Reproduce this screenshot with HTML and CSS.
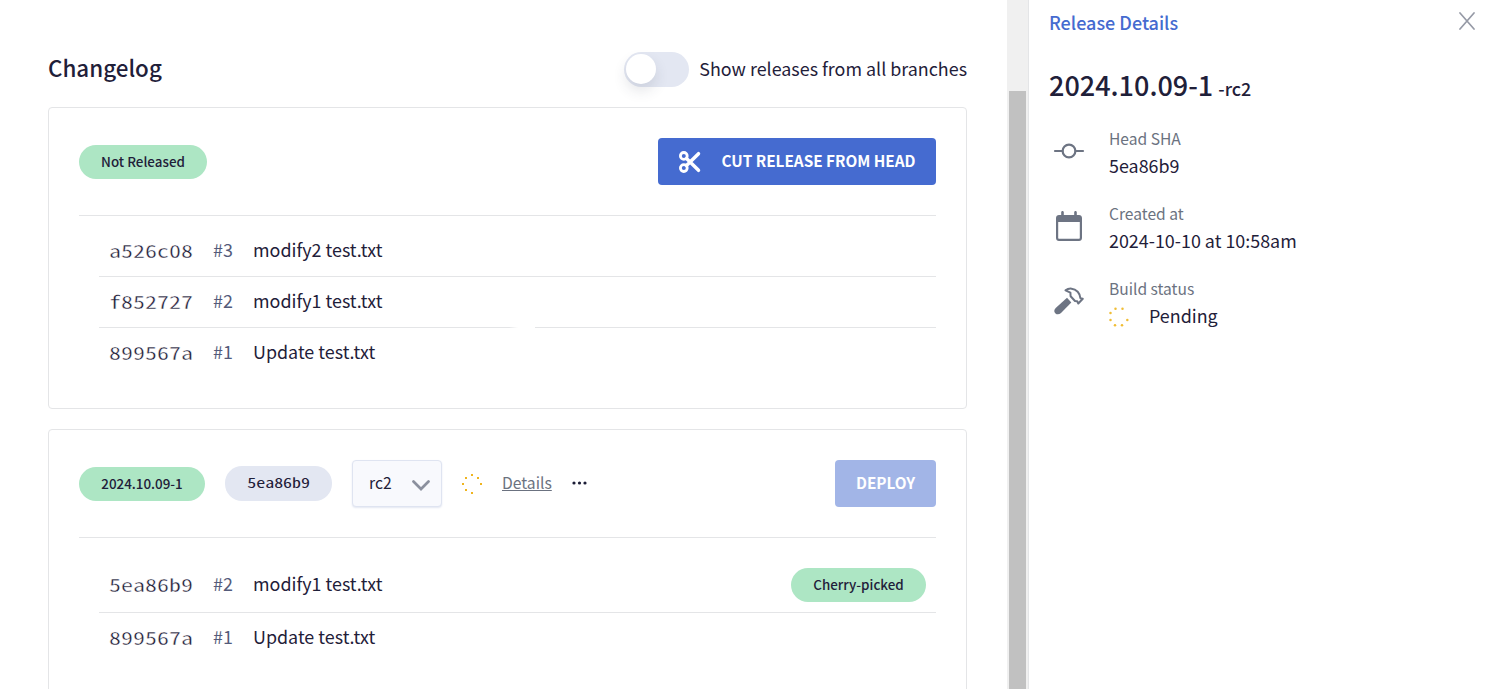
FILE: index.html
```html
<!DOCTYPE html>
<html lang="en">
<head>
<meta charset="utf-8">
<title>Changelog</title>
<link rel="stylesheet" href="styles.css">
</head>
<body>
<div class="app">
  <main class="main">
    <header class="page-head">
      <h1 class="title">Changelog</h1>
      <div class="toggle-row">
        <div class="toggle"><div class="knob"></div></div>
        <span class="toggle-label">Show releases from all branches</span>
      </div>
    </header>

    <section class="card">
      <div class="card-head">
        <span class="pill green">Not Released</span>
        <button class="btn cut">
          <svg class="scissors" viewBox="0 0 22 22" fill="none" stroke="currentColor"><circle cx="4.800" cy="4.900" r="3.400" stroke-width="2.800"/><circle cx="4.800" cy="17.100" r="3.400" stroke-width="2.800"/><path d="M7.500 14.400 19.500 2.700M7.500 7.600 19.500 19.300" stroke-width="3.500" stroke-linecap="round"/></svg>
          <span>CUT RELEASE FROM HEAD</span>
        </button>
      </div>
      <div class="commits">
        <div class="row"><span class="sha"><span class="mono">a526c08</span></span><span class="pr">#3</span><span class="msg">modify2 test.txt</span></div>
        <div class="row broken"><span class="sha"><span class="mono">f852727</span></span><span class="pr">#2</span><span class="msg">modify1 test.txt</span></div>
        <div class="row"><span class="sha"><span class="mono">899567a</span></span><span class="pr">#1</span><span class="msg">Update test.txt</span></div>
      </div>
    </section>

    <section class="card">
      <div class="card-head">
        <div class="head-left">
          <span class="pill green version">2024.10.09-1</span>
          <span class="pill gray"><span class="mono">5ea86b9</span></span>
          <div class="select"><span class="lift">rc2</span>
            <svg class="chevron" viewBox="0 0 18 11"><path d="M1.500 1.500 9 9l7.500-7.500" fill="none" stroke="#8b909e" stroke-width="2.700" stroke-linecap="round"/></svg>
          </div>
          <svg class="spin" viewBox="0 0 20 20" fill="#efb41f"><rect x="9" y="0" width="2" height="2"/><rect x="15" y="3" width="2" height="2"/><rect x="18" y="9" width="2" height="2"/><rect x="9" y="18" width="2" height="2"/><rect x="3" y="15" width="2" height="2"/><rect x="0" y="9" width="2" height="2"/><rect x="3" y="3" width="2" height="2"/></svg>
          <a class="details">Details</a>
          <svg class="dots" viewBox="0 0 15 4" fill="#1b1d36"><circle cx="2" cy="2" r="1.600"/><circle cx="7.500" cy="2" r="1.600"/><circle cx="13" cy="2" r="1.600"/></svg>
        </div>
        <button class="btn deploy">DEPLOY</button>
      </div>
      <div class="commits tall">
        <div class="row picked"><span class="sha"><span class="mono">5ea86b9</span></span><span class="pr">#2</span><span class="msg">modify1 test.txt</span><span class="pill green cherry">Cherry-picked</span></div>
        <div class="row"><span class="sha"><span class="mono">899567a</span></span><span class="pr">#1</span><span class="msg">Update test.txt</span></div>
      </div>
    </section>
  </main>
  <div class="scrollbar"><div class="thumb"></div></div>
  <aside class="panel">
    <div class="panel-head">
      <span class="panel-title">Release Details</span>
      <svg class="close" viewBox="0 0 16 18"><path d="M1 1l14 16M15 1 1 17" stroke="#969aa6" stroke-width="1.700" stroke-linecap="round"/></svg>
    </div>
    <h2 class="release"><span class="rel-num">2024.10.09-1</span><span class="rel-rc">-rc2</span></h2>
    <div class="item">
      <svg class="icon" viewBox="0 0 30 30" fill="none" stroke="#6d7483" stroke-width="2.200" stroke-linecap="round"><circle cx="15" cy="15" r="6.400"/><path d="M1 15h7.500M21.500 15H29"/></svg>
      <div class="info"><span class="label">Head SHA</span><span class="value">5ea86b9</span></div>
    </div>
    <div class="item">
      <svg class="icon" viewBox="0 0 30 30" fill="#6d7483"><path fill-rule="evenodd" d="M8.500 0c.8 0 1.300.6 1.300 1.300V4h10.400V1.300c0-.7.5-1.300 1.300-1.300s1.300.6 1.300 1.300V4H25c1.700 0 3 1.300 3 3v20c0 1.700-1.300 3-3 3H5c-1.700 0-3-1.300-3-3V7c0-1.700 1.300-3 3-3h2.200V1.300C7.200.6 7.700 0 8.500 0ZM4.200 11v15.700c0 .7.400 1 1 1h19.600c.6 0 1-.3 1-1V11Z"/></svg>
      <div class="info"><span class="label">Created at</span><span class="value">2024-10-10 at 10:58am</span></div>
    </div>
    <div class="item">
      <svg class="icon" viewBox="0 0 30 30" fill="#6d7483"><path d="M13 11.800 17.300 16.500 7 27c-1.700 1.600-4 1.800-5.500.5-1.700-1.500-1.700-3.800.2-5.600Z"/><path d="M11.500 4.400C15 1.700 20 2 23.700 5.700 25.700 7.800 26.200 9.500 26.400 12.300L28.800 12.800 24.300 17.500 23.200 15.300 21 15 16.600 10.200 16.400 6.600 11.500 4.400Z" fill="none" stroke="#6d7483" stroke-width="2" stroke-linejoin="round"/></svg>
      <div class="info"><span class="label">Build status</span>
        <span class="value status"><svg class="spin low" viewBox="0 0 20 20" fill="#f0bd35"><circle cx="6.500" cy="1.700" r="1.250"/><circle cx="13.500" cy="1.700" r="1.250"/><circle cx="1.500" cy="6" r="1.250"/><circle cx="1.500" cy="13" r="1.250"/><circle cx="6" cy="18.300" r="1.250"/><circle cx="13" cy="18.300" r="1.250"/><circle cx="18.300" cy="13" r="1.250"/></svg><span>Pending</span></span>
      </div>
    </div>
  </aside>
</div>
</body>
</html>
```

FILE: styles.css
```css
* { box-sizing: border-box; }
body { margin: 0; overflow: hidden; background: #fff; color: #1f2039; font-family: "Noto Sans CJK SC", "Noto Sans", sans-serif; font-size: 17.9px; font-weight: 400; line-height: 24px; }
span, a { white-space: nowrap; }
svg { display: block; flex: none; }
.app { display: flex; height: 689px; }
.main { width: 1007px; padding: 50px 40px 0 48px; overflow: hidden; flex: none; }
.page-head { display: flex; justify-content: space-between; align-items: center; height: 39px; margin-bottom: 18px; }
.title { margin: 0; padding-bottom: 5px; font-size: 22.400px; font-weight: 500; }
.toggle-row { display: flex; align-items: center; gap: 10px; }
.toggle { width: 65px; height: 35px; border-radius: 18px; background: #e3e7f2; padding: 2px; }
.toggle-label { padding-bottom: 3px; }
.knob { width: 30px; height: 30px; border-radius: 50%; background: #fff; box-shadow: 0 7px 14px rgba(50, 55, 80, .13); }
.card { border: 1px solid #e4e5e7; border-radius: 4px; padding: 30px; margin-bottom: 20px; height: 302px; }
.card-head { display: flex; align-items: center; justify-content: space-between; height: 78px; padding-bottom: 30px; border-bottom: 1px solid #e4e5e7; }
.pill { display: flex; justify-content: center; align-items: center; height: 34px; border-radius: 17px; padding-bottom: 2px; font-size: 13.4px; font-weight: 500; width: 128px; }
.green { background: #ade6c4; }
.version { width: 126px; }
.gray { width: 107px; height: 35px; background: #e3e7f2; padding-bottom: 3px; }
.mono { display: inline-block; font-family: "Noto Sans Mono CJK SC", "Liberation Mono", monospace; transform: scaleX(1.3333); transform-origin: left; font-size: 18px; }
.sha .mono { -webkit-text-stroke: .35px #fff; }
.gray .mono { font-size: 13.500px; transform-origin: center; }
.btn { display: flex; align-items: center; justify-content: center; height: 47px; border: 0; border-radius: 4px; color: #fff; background: #456bd0; font: bold 15.300px/24px "Noto Sans CJK SC", sans-serif; padding: 0 0 3px; }
.cut { width: 278px; gap: 21px; }
.scissors { width: 22px; height: 22px; margin-top: 3px; }
.deploy { width: 101px; background: #a2b5e7; }
.commits { margin-left: 20px; padding-top: 10px; }
.tall { padding-top: 20px; }
.row { display: flex; align-items: center; height: 51px; padding: 0 10px 4px; border-bottom: 1px solid #e4e5e7; }
.row:last-child { border: 0; height: 50px; padding-bottom: 5px; }
.picked { height: 55px; }
.broken { border-bottom: 0; padding-bottom: 6px; background: linear-gradient(90deg, #e4e5e7 410px, #fff 419px, #fff 436px, #e4e5e7 436px) bottom / 100% 1px no-repeat; }
.sha { width: 104px; padding-top: 2px; }
.pr { width: 40px; color: #545b7a; }
.cherry { width: 135px; margin-left: auto; position: relative; top: 2px; }
.head-left { display: flex; align-items: center; gap: 20px; }
.select { display: flex; align-items: center; justify-content: space-between; width: 90px; height: 47px; padding: 0 11px 0 16px; border: 1px solid #dfe4f1; border-radius: 4px; background: #f8f9fd; box-shadow: 0 1px 2px #e3e7f2; font-size: 15.700px; }
.lift { padding-bottom: 1px; }
.chevron { width: 18px; height: 11px; margin-top: 3px; }
.spin { width: 20px; height: 20px; }
.low { margin-top: 4px; }
.details { color: #6b7280; font-size: 15.700px; text-decoration: underline; padding-bottom: 1px; }
.dots { width: 15px; height: 4px; margin-bottom: 2px; }
.scrollbar { width: 21px; flex: none; background: #f0f0f0; padding: 91px 2px 0; }
.thumb { height: 598px; background: #c1c1c1; }
.panel { flex: 1; border-left: 1px solid #e4e5e7; padding: 10px 32px 0 20px; }
.panel-head { display: flex; justify-content: space-between; height: 48px; }
.panel-title { color: #456bd0; font-size: 18px; font-weight: 500; }
.close { width: 16px; height: 18px; margin-top: 2px; }
.release { display: flex; align-items: baseline; gap: 5px; margin: 0; height: 68px; font-weight: 500; line-height: 54px; }
.rel-num { font-size: 27px; }
.rel-rc { font-size: 17.900px; }
.item { display: flex; gap: 25px; height: 75px; padding-left: 5px; }
.icon { width: 30px; height: 30px; margin-top: 10px; overflow: visible; }
.info { display: flex; flex-direction: column; }
.label { color: #6b7280; font-size: 15.600px; line-height: 24px; }
.value { line-height: 30px; }
.status { display: flex; align-items: center; gap: 20px; }
```
